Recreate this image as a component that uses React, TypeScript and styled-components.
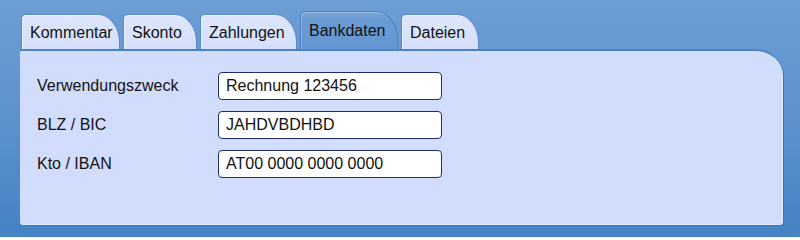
import React from 'react';
import styled, { createGlobalStyle } from 'styled-components';

const GlobalStyle = createGlobalStyle`
  html, body {
    margin: 0;
    padding: 0;
  }
  body {
    font-family: 'Liberation Sans', Arial, sans-serif;
    color: #111;
  }
`;

const Window = styled.div`
  width: 800px;
  height: 237px;
  box-sizing: border-box;
  padding: 11px 17px 11px 20px;
  display: flex;
  flex-direction: column;
  background: linear-gradient(to bottom, #6d9dd4 0%, #5f93cf 45%, #4583c4 100%);
  overflow: hidden;
`;

const TabStrip = styled.div`
  display: flex;
  align-items: flex-end;
  gap: 3px;
  height: 38px;
  padding-left: 1px;
  flex: 0 0 auto;
`;

const Tab = styled.div<{ $width: number; $active?: boolean }>`
  box-sizing: border-box;
  width: ${(p) => p.$width}px;
  height: ${(p) => (p.$active ? 38 : 35)}px;
  padding: ${(p) => (p.$active ? 0 : 1)}px 0 0 8px;
  display: flex;
  align-items: center;
  font-size: 16px;
  color: #121212;
  border: 1px solid ${(p) => (p.$active ? '#4d80c0' : '#5a8cca')};
  border-bottom: none;
  border-radius: 5px 22px 0 0 / 5px 28px 0 0;
  background: ${(p) =>
    p.$active
      ? 'linear-gradient(to bottom, #7aa6da 0%, #6a9bd3 20%, #6496d1 100%)'
      : 'linear-gradient(to bottom, #dde6fc 0%, #d5dffb 100%)'};
  box-shadow: ${(p) => (p.$active ? 'inset 1px 1px 0 rgba(255,255,255,0.25)' : 'inset 1px 1px 0 #eef2ff')};
`;

const Panel = styled.div`
  flex: 0 0 auto;
  height: 176px;
  box-sizing: border-box;
  background: #d2ddfd;
  border-top: 2px solid #4c82c4;
  border-radius: 0 27px 4px 4px;
  box-shadow: inset -1px 0 0 #e7edff, inset 0 -1px 0 #e3eaff, 1px 1px 0 #3c74b8;
  padding: 21px 0 0 17px;
`;

const FormGrid = styled.div`
  display: grid;
  grid-template-columns: 181px 224px;
  row-gap: 11px;
  align-items: center;
`;

const Label = styled.div`
  font-size: 16px;
  color: #121212;
`;

const Field = styled.div`
  box-sizing: border-box;
  height: 28px;
  background: #ffffff;
  border: 1.5px solid #1f2d6b;
  border-radius: 4px;
  padding: 0 0 0 7px;
  display: flex;
  align-items: center;
  font-size: 16px;
  color: #121212;
`;

const tabs = [
  { label: 'Kommentar', width: 99 },
  { label: 'Skonto', width: 74 },
  { label: 'Zahlungen', width: 97 },
  { label: 'Bankdaten', width: 98, active: true },
  { label: 'Dateien', width: 78 },
];

const rows = [
  { label: 'Verwendungszweck', value: 'Rechnung 123456' },
  { label: 'BLZ / BIC', value: 'JAHDVBDHBD' },
  { label: 'Kto / IBAN', value: 'AT00 0000 0000 0000' },
];

export default function App() {
  return (
    <>
      <GlobalStyle />
      <Window>
        <TabStrip>
          {tabs.map((t) => (
            <Tab key={t.label} $width={t.width} $active={t.active}>
              {t.label}
            </Tab>
          ))}
        </TabStrip>
        <Panel>
          <FormGrid>
            {rows.map((r) => (
              <React.Fragment key={r.label}>
                <Label>{r.label}</Label>
                <Field>{r.value}</Field>
              </React.Fragment>
            ))}
          </FormGrid>
        </Panel>
      </Window>
    </>
  );
}
